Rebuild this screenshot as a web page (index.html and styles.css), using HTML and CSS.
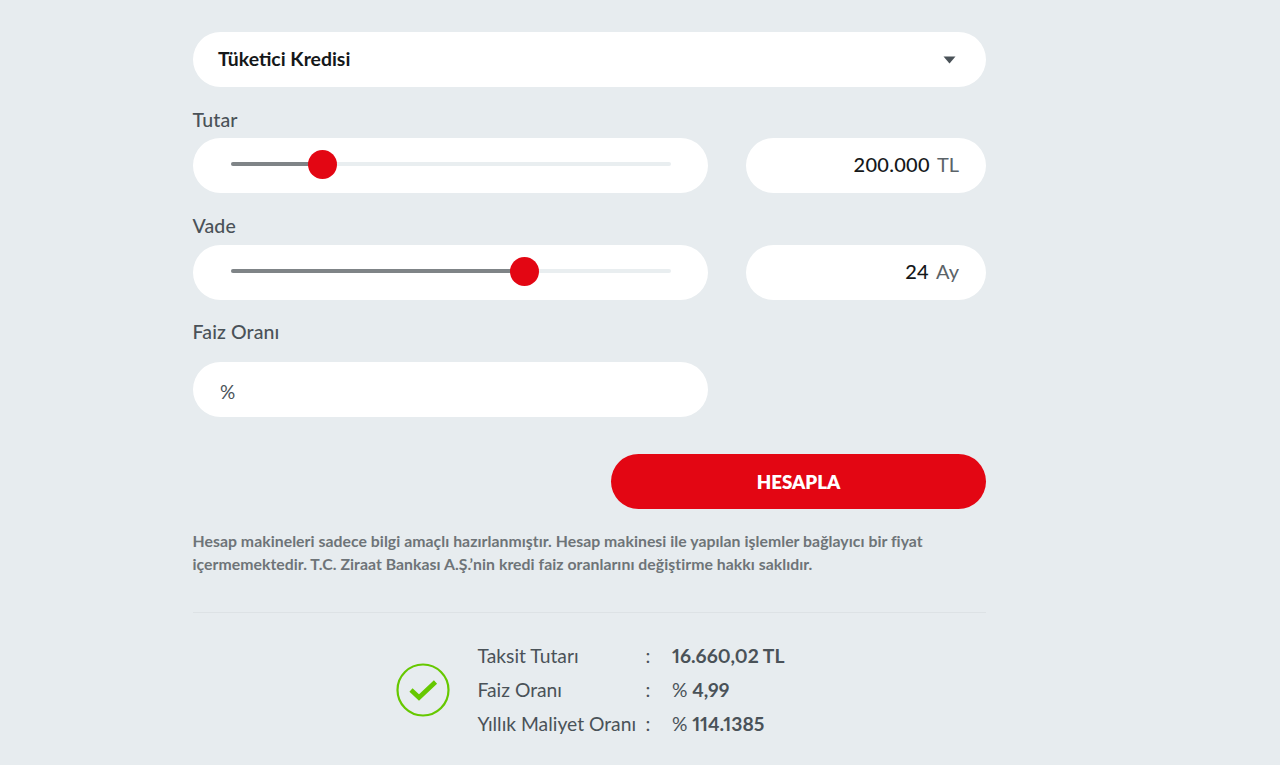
FILE: index.html
```html
<!DOCTYPE html>
<html lang="tr">
<head>
<meta charset="utf-8">
<title>Kredi Hesaplama</title>
<link rel="stylesheet" href="styles.css">
</head>
<body>
<main class="calc">
  <div class="pill select">
    <span>Tüketici Kredisi</span>
    <svg class="caret" width="13" height="8" viewBox="0 0 13 8"><path d="M0.5 0.5h12L6.5 7.5z" fill="#4a5258"/></svg>
  </div>

  <label class="label label-tutar">Tutar</label>
  <div class="row">
    <div class="pill slider">
      <div class="track">
        <div class="fill fill-tutar"></div>
        <div class="thumb"></div>
      </div>
    </div>
    <div class="pill value"><b>200.000</b><span>TL</span></div>
  </div>

  <label class="label label-vade">Vade</label>
  <div class="row">
    <div class="pill slider">
      <div class="track">
        <div class="fill fill-vade"></div>
        <div class="thumb"></div>
      </div>
    </div>
    <div class="pill value"><b>24</b><span>Ay</span></div>
  </div>

  <label class="label label-faiz">Faiz Oranı</label>
  <div class="row">
    <div class="pill percent">%</div>
  </div>

  <div class="actions"><button class="submit" type="button">HESAPLA</button></div>

  <p class="note">Hesap makineleri sadece bilgi amaçlı hazırlanmıştır. Hesap makinesi ile yapılan işlemler bağlayıcı bir fiyat içermemektedir. T.C. Ziraat Bankası A.Ş.’nin kredi faiz oranlarını değiştirme hakkı saklıdır.</p>

  <hr class="divider">

  <section class="result">
    <svg class="check" width="54" height="54" viewBox="0 0 54 54"><circle cx="27" cy="27" r="25.5" fill="none" stroke="#66c800" stroke-width="2.2"/><path d="M15 27l8 7.5 16.5-15.5" fill="none" stroke="#66c800" stroke-width="4.6"/></svg>
    <dl class="list">
      <dt>Taksit Tutarı</dt><dd class="colon">:</dd><dd class="num">16.660,02 TL</dd>
      <dt>Faiz Oranı</dt><dd class="colon">:</dd><dd class="num"><span>%</span> 4,99</dd>
      <dt>Yıllık Maliyet Oranı</dt><dd class="colon">:</dd><dd class="num"><span>%</span> 114.1385</dd>
    </dl>
  </section>
</main>
</body>
</html>
```

FILE: styles.css
```css
* { box-sizing: border-box; }
html, body { margin: 0; height: 100%; }
body {
  background: #e7ecef;
  font-family: "Lato", "Liberation Sans", sans-serif;
  font-variant-numeric: proportional-nums;
  color: #4a5258;
  overflow: hidden;
}
.calc {
  width: 793.5px;
  margin-left: 192.5px;
  padding-top: 32px;
}
.pill {
  height: 55px;
  background: #fff;
  border-radius: 28px;
}
.select {
  display: flex;
  align-items: center;
  justify-content: space-between;
  padding: 0 30px 2px 25.5px;
  font-size: 19.4px;
  font-weight: 700;
  color: #15181a;
}
.caret { margin-top: 3px; }
.label {
  display: block;
  font-size: 19.5px;
  font-weight: 500;
  line-height: 24px;
  letter-spacing: .12px;
}
.label-tutar { margin-top: 21px; margin-bottom: 6px; }
.label-vade { margin-top: 21px; margin-bottom: 7px; }
.label-faiz { margin-top: 20px; margin-bottom: 18px; }
.row {
  display: grid;
  grid-template-columns: 515.5px 240px;
  column-gap: 38px;
}
.slider {
  padding: 0 37px 3px 38px;
  display: flex;
  align-items: center;
}
.track {
  position: relative;
  flex: 1;
  height: 4px;
  background: #e9eef0;
  border-radius: 2px;
}
.fill {
  height: 100%;
  background: #7f8487;
  border-radius: 2px;
}
.fill-tutar { width: 21%; }
.fill-vade { width: 67%; }
.thumb {
  position: absolute;
  top: -12.5px;
  width: 29px;
  height: 29px;
  border-radius: 50%;
  background: #e30613;
}
.fill-tutar + .thumb { left: 77px; }
.fill-vade + .thumb { left: 279px; }
.value {
  display: flex;
  align-items: center;
  justify-content: flex-end;
  gap: 7px;
  padding: 0 27px 4px 0;
  font-size: 20px;
  font-variant-numeric: tabular-nums;
  color: #15181a;
}
.value b { font-weight: 500; letter-spacing: .3px; }
.value span { color: #5b6368; font-weight: 400; }
.percent {
  display: flex;
  align-items: center;
  padding: 3px 0 0 27.5px;
  font-size: 19px;
  color: #4a5258;
}
.actions {
  display: flex;
  justify-content: flex-end;
  margin-top: 37px;
}
.submit {
  width: 375px;
  height: 55px;
  border: 0;
  border-radius: 28px;
  background: #e30613;
  color: #fff;
  font: 800 18.7px "Lato", "Liberation Sans", sans-serif;
}
.note {
  margin: 20px 0 0;
  font-size: 15.8px;
  line-height: 23px;
  font-weight: 700;
  letter-spacing: .04px;
  color: #6e7478;
}
.divider {
  margin: 37px 0 0;
  border: 0;
  border-top: 1px solid #dde2e5;
}
.result {
  display: flex;
  align-items: center;
  margin: 25px 0 0 203px;
}
.check { flex: none; margin-top: 2px; }
.list {
  margin: 0 0 0 28px;
  display: grid;
  grid-template-columns: 168px 26px auto;
  grid-auto-rows: 34px;
  align-items: center;
  font-size: 19.3px;
}
.list dd { margin: 0; }
.num { font-weight: 700; padding-left: .5px; }
.num span { font-weight: 400; }
```
